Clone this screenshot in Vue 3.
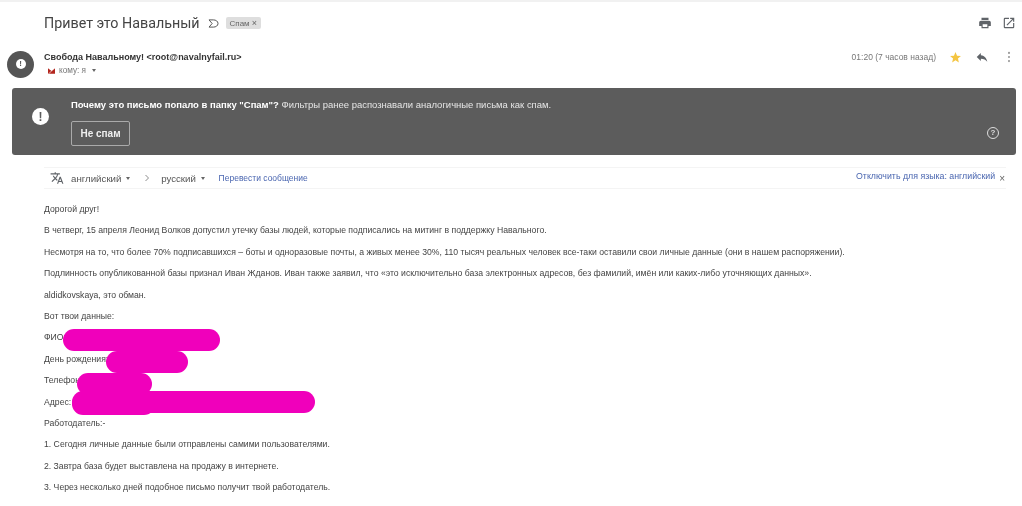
<template>
  <div class="page">
    <div class="top-edge"></div>

    <div class="subject-row">
      <h1 class="subject">Привет это Навальный</h1>
      <svg class="importance" viewBox="0 0 12 10" width="11" height="9">
        <path d="M1 1h5c2.500 0 5 1.500 5 4s-2.500 4-5 4H1l3.500-4z" fill="none" stroke="#555" stroke-width="1.100" />
      </svg>
      <span class="label">Спам <span class="label-x">×</span></span>
      <div class="subject-actions">
        <svg viewBox="0 0 24 24" width="14" height="14">
          <path fill="#5f6368" d="M19 8H5c-1.660 0-3 1.340-3 3v6h4v4h12v-4h4v-6c0-1.660-1.340-3-3-3zm-3 11H8v-5h8v5zM18 3H6v4h12V3z" />
        </svg>
        <svg viewBox="0 0 24 24" width="14" height="14">
          <path fill="#5f6368" d="M19 19H5V5h7V3H5a2 2 0 0 0-2 2v14a2 2 0 0 0 2 2h14a2 2 0 0 0 2-2v-7h-2v7zM14 3v2h3.590l-9.830 9.830 1.410 1.410L19 6.410V10h2V3h-7z" />
        </svg>
      </div>
    </div>

    <div class="sender-row">
      <div class="avatar"><span>!</span></div>
      <div class="sender-info">
        <div class="sender">Свобода Навальному! &lt;root@navalnyfail.ru&gt;</div>
        <div class="recipient">
          <svg viewBox="0 0 10 10" width="7" height="8">
            <path fill="#b3261e" d="M0 1l5 4 5-4v8H0z" />
            <path stroke="#fff" stroke-width="1" d="M1 9l8-8" />
          </svg>
          <span>кому: я</span>
          <i class="caret"></i>
        </div>
      </div>
      <div class="sender-meta">
        <span class="time">01:20 (7 часов назад)</span>
        <svg viewBox="0 0 24 24" width="13" height="13">
          <path fill="#f4c542" d="M12 17.300l6.200 3.700-1.640-7.030L22 9.240l-7.190-.61L12 2 9.190 8.630 2 9.240l5.460 4.730L5.820 21z" />
        </svg>
        <svg viewBox="0 0 24 24" width="14" height="14">
          <path fill="#5f6368" d="M10 9V5l-7 7 7 7v-4.100c5 0 8.500 1.600 11 5.100-1-5-4-10-11-11z" />
        </svg>
        <svg viewBox="0 0 24 24" width="14" height="14">
          <circle cx="12" cy="5" r="1.800" fill="#9a9a9a" />
          <circle cx="12" cy="12" r="1.800" fill="#9a9a9a" />
          <circle cx="12" cy="19" r="1.800" fill="#9a9a9a" />
        </svg>
      </div>
    </div>

    <div class="spam-banner">
      <div class="banner-icon"><span>!</span></div>
      <div class="banner-main">
        <p class="banner-text"><b>Почему это письмо попало в папку "Спам"?</b> Фильтры ранее распознавали аналогичные письма как спам.</p>
        <button class="not-spam">Не спам</button>
      </div>
      <div class="banner-help">?</div>
    </div>

    <div class="translate-row">
      <svg viewBox="0 0 24 24" width="14" height="14">
        <path fill="#5f6368" d="M12.870 15.070l-2.540-2.510.030-.030A17.520 17.520 0 0 0 14.070 6H17V4h-7V2H8v2H1v2h11.170C11.500 7.920 10.440 9.750 9 11.350 8.070 10.320 7.300 9.190 6.690 8h-2c.730 1.630 1.730 3.170 2.980 4.560l-5.090 5.020L4 19l5-5 3.110 3.110.760-2.040zM18.500 10h-2L12 22h2l1.120-3h4.750L21 22h2l-4.500-12zm-2.620 7l1.620-4.330L19.120 17h-3.240z" />
      </svg>
      <span class="lang first-lang">английский <i class="caret"></i></span>
      <svg class="chevron" viewBox="0 0 8 10" width="6" height="8">
        <path d="M2 1l4 4-4 4" fill="none" stroke="#666" stroke-width="1" />
      </svg>
      <span class="lang">русский <i class="caret"></i></span>
      <a class="translate-link">Перевести сообщение</a>
      <a class="disable-link">Отключить для языка: английский</a>
      <span class="close-x">×</span>
    </div>

    <div class="message">
      <p v-for="line in lines" :key="line">{{ line }}</p>
      <svg class="scribbles" viewBox="0 0 1022 506" width="1022" height="506">
        <g v-for="(s, i) in scribbles" :key="i">
          <line :x1="s[0]" :y1="s[1]" :x2="s[2]" :y2="s[3]" stroke="#f000bb" stroke-width="22" stroke-linecap="round" />
        </g>
      </svg>
    </div>
  </div>
</template>

<script setup>
const lines = [
  'Дорогой друг!',
  'В четверг, 15 апреля Леонид Волков допустил утечку базы людей, которые подписались на митинг в поддержку Навального.',
  'Несмотря на то, что более 70% подписавшихся – боты и одноразовые почты, а живых менее 30%, 110 тысяч реальных человек все-таки оставили свои личные данные (они в нашем распоряжении).',
  'Подлинность опубликованной базы признал Иван Жданов. Иван также заявил, что «это исключительно база электронных адресов, без фамилий, имён или каких-либо уточняющих данных».',
  'aldidkovskaya, это обман.',
  'Вот твои данные:',
  'ФИО:',
  'День рождения:',
  'Телефон:',
  'Адрес:',
  'Работодатель:-',
  '1. Сегодня личные данные были отправлены самими пользователями.',
  '2. Завтра база будет выставлена на продажу в интернете.',
  '3. Через несколько дней подобное письмо получит твой работодатель.'
]

const scribbles = [
  [74, 340, 209, 340],
  [117, 362, 177, 362],
  [88, 384, 141, 384],
  [83, 402, 304, 402],
  [83, 404, 144, 404]
]
</script>

<style>
html, body {
  margin: 0;
  background: #fff;
  overflow: hidden;
}
</style>

<style scoped>
.page {
  position: relative;
  width: 1022px;
  height: 506px;
  overflow: hidden;
  background: #fff;
  font-family: "Liberation Sans", Roboto, sans-serif;
  color: #444;
  filter: blur(0.5px);
}

.top-edge {
  height: 2px;
  background: #f1f1f1;
}

.subject-row {
  display: flex;
  align-items: center;
  height: 34px;
  padding: 8px 6px 0 44px;
  box-sizing: border-box;
}

.subject {
  margin: 0;
  font-family: Roboto, "Liberation Sans", sans-serif;
  font-size: 14.300px;
  font-weight: 400;
  color: #444;
}

.importance {
  margin-left: 8px;
}

.label {
  margin-left: 7px;
  padding: 1px 4px;
  font-size: 8px;
  color: #666;
  background: #dedede;
  border-radius: 2px;
}

.label-x {
  font-size: 9px;
}

.subject-actions {
  display: flex;
  gap: 10px;
  margin-left: auto;
}

.sender-row {
  display: flex;
  align-items: flex-start;
  padding: 13px 6px 0 7px;
  height: 52px;
  box-sizing: border-box;
}

.avatar {
  display: flex;
  flex: none;
  align-items: center;
  justify-content: center;
  width: 27px;
  height: 27px;
  margin-top: 1.500px;
  background: #555;
  border-radius: 50%;
}

.avatar span {
  display: block;
  width: 10px;
  height: 10px;
  font-size: 8px;
  font-weight: 700;
  line-height: 10px;
  text-align: center;
  color: #555;
  background: #fff;
  border-radius: 50%;
}

.sender-info {
  margin-left: 10px;
}

.sender {
  font-size: 9px;
  font-weight: 700;
  line-height: 16px;
  color: #333;
}

.recipient {
  display: flex;
  align-items: center;
  gap: 4px;
  margin-left: 4px;
  font-size: 8.200px;
  line-height: 11px;
  color: #777;
}

.caret {
  display: inline-block;
  width: 0;
  height: 0;
  margin-left: 2px;
  vertical-align: middle;
  border-top: 3px solid #666;
  border-left: 2.500px solid transparent;
  border-right: 2.500px solid transparent;
}

.sender-meta {
  display: flex;
  align-items: center;
  gap: 13px;
  margin-left: auto;
  height: 16px;
}

.time {
  font-size: 8.500px;
  color: #777;
}

.spam-banner {
  display: flex;
  align-items: flex-start;
  height: 67px;
  margin: 0 6px 0 12px;
  background: #5c5c5c;
  border-radius: 3px;
  box-sizing: border-box;
  position: relative;
}

.banner-icon {
  display: flex;
  flex: none;
  align-items: center;
  justify-content: center;
  width: 17px;
  height: 17px;
  margin: 20px 0 0 20px;
  background: #fff;
  border-radius: 50%;
}

.banner-icon span {
  font-size: 12px;
  font-weight: 700;
  line-height: 12px;
  color: #5c5c5c;
}

.banner-main {
  margin-left: 22px;
  padding-top: 10px;
}

.banner-text {
  margin: 0;
  font-size: 9.480px;
  line-height: 13px;
  color: #e6e6e6;
}

.banner-text b {
  font-weight: 700;
  color: #fff;
}

.not-spam {
  display: block;
  width: 59px;
  height: 25px;
  margin-top: 10px;
  padding: 0;
  font-family: inherit;
  font-size: 10px;
  font-weight: 700;
  color: #eee;
  background: transparent;
  border: 1px solid #aaa;
  border-radius: 2px;
}

.banner-help {
  position: absolute;
  right: 17px;
  bottom: 16px;
  width: 10px;
  height: 10px;
  font-size: 8px;
  font-weight: 700;
  line-height: 10px;
  text-align: center;
  color: #ddd;
  border: 1.500px solid #ddd;
  border-radius: 50%;
}

.translate-row {
  display: flex;
  align-items: center;
  height: 22px;
  margin: 12px 16px 0 44px;
  padding: 0 1px 0 6px;
  font-size: 8.500px;
  color: #555;
  border-top: 1px solid #f4f4f4;
  border-bottom: 1px solid #f4f4f4;
  box-sizing: border-box;
}

.lang {
  font-size: 9.700px;
  white-space: nowrap;
}

.first-lang {
  margin-left: 7px;
}

.chevron {
  margin: 0 11px 0 14px;
}

.translate-link {
  margin-left: 14px;
  color: #4a66b0;
}

.disable-link {
  margin-left: auto;
  margin-top: -4px;
  font-size: 8.800px;
  color: #4a66b0;
}

.close-x {
  margin-left: 4px;
  font-size: 10px;
  color: #666;
}

.message {
  padding: 10px 0 0 44px;
  font-size: 8.670px;
  color: #444;
}

.message p {
  margin: 0;
  height: 21.400px;
  line-height: 21.400px;
  white-space: nowrap;
}

.scribbles {
  position: absolute;
  top: 0;
  left: 0;
  pointer-events: none;
}
</style>
